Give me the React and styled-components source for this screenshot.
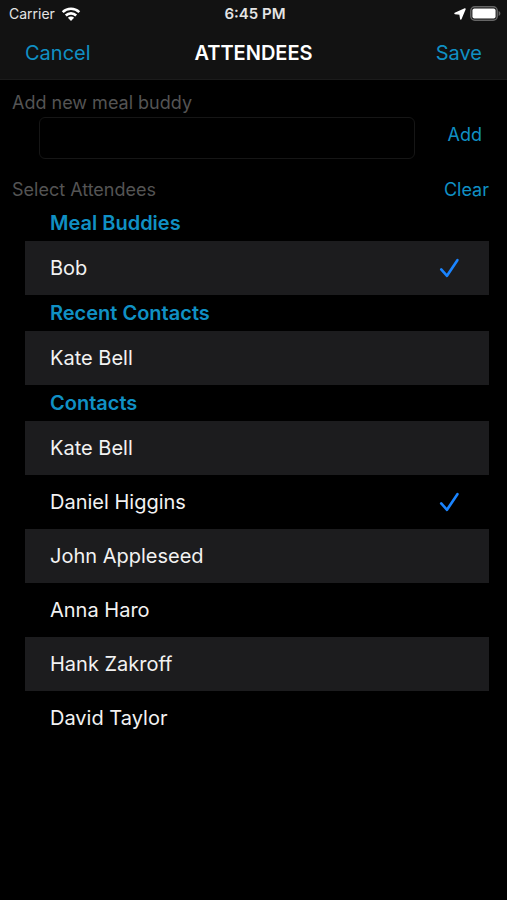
import { useState } from "react";
import styled, { createGlobalStyle } from "styled-components";

const GlobalStyle = createGlobalStyle`
  * {
    box-sizing: border-box;
  }

  body {
    margin: 0;
    background-color: #000;
    color: #f2f2f2;
    font-family: Inter, "Liberation Sans", sans-serif;
    font-size: 20px;
  }

  button,
  input {
    font: inherit;
  }
`;

const Screen = styled.div`
  min-height: 100vh;
  background-color: #000;
`;

const TopBar = styled.header`
  background-color: #121212;
  border-bottom: 1px solid #1b1b1b;
`;

const StatusBar = styled.div`
  display: grid;
  grid-template-columns: 1fr auto 1fr;
  align-items: center;
  height: 27px;
  padding: 0 6px 0 9px;
  font-size: 14px;
  color: #e4e4e4;
`;

const StatusGroup = styled.div`
  display: flex;
  align-items: center;
  justify-content: ${(props) => (props.$end ? "flex-end" : "flex-start")};
  gap: ${(props) => (props.$end ? "4px" : "6px")};
`;

const Clock = styled.time`
  font-size: 15px;
  font-weight: 600;
`;

const NavBar = styled.nav`
  display: grid;
  grid-template-columns: 1fr auto 1fr;
  align-items: center;
  height: 52px;
  padding: 0 25px;
`;

const Title = styled.h1`
  margin: 0;
  font-size: 20px;
  font-weight: 600;
  color: #fff;
`;

const TextButton = styled.button`
  padding: 0;
  border: 0;
  background: none;
  color: #1090c4;
  font-size: ${(props) => (props.$small ? "18px" : "20px")};
  line-height: 36px;
  justify-self: ${(props) => (props.$end ? "end" : "start")};
  cursor: pointer;
`;

const Content = styled.main`
  padding: 12px 18px 24px 12px;
`;

const Caption = styled.label`
  display: block;
  font-size: 18px;
  line-height: 22px;
  color: #545454;
`;

const AddForm = styled.form`
  display: flex;
  align-items: flex-start;
  gap: 33px;
  margin-top: 3px;
  padding: 0 7px 0 27px;
`;

const NameInput = styled.input`
  flex: 1;
  min-width: 0;
  height: 42px;
  padding: 0 10px;
  border: 1px solid #161616;
  border-radius: 6px;
  background-color: #000;
  color: #f2f2f2;
  outline: none;
`;

const ListHeader = styled.div`
  display: flex;
  align-items: center;
  justify-content: space-between;
  height: 30px;
  margin-top: 16px;
`;

const Group = styled.section`
  margin-left: 13px;
`;

const GroupTitle = styled.h2`
  margin: 0;
  padding-left: 25px;
  font-size: 20px;
  font-weight: 600;
  line-height: 36px;
  color: #1090c4;
`;

const List = styled.ul`
  margin: 0;
  padding: 0;
  list-style: none;
`;

const Item = styled.li`
  &:nth-child(odd) {
    background-color: #1c1c1e;
  }
`;

const ItemLabel = styled.label`
  display: flex;
  align-items: center;
  justify-content: space-between;
  height: 54px;
  padding: 0 28px 0 25px;
  cursor: pointer;
`;

const CheckBox = styled.span`
  display: grid;
  width: 22px;
  height: 22px;

  input,
  svg {
    grid-area: 1 / 1;
    width: 22px;
    height: 22px;
    margin: 0;
  }

  input {
    appearance: none;
  }

  svg {
    visibility: hidden;
    pointer-events: none;
  }

  input:checked + svg {
    visibility: visible;
  }
`;

const groups = [
  { title: "Meal Buddies", people: ["Bob"] },
  { title: "Recent Contacts", people: ["Kate Bell"] },
  {
    title: "Contacts",
    people: [
      "Kate Bell",
      "Daniel Higgins",
      "John Appleseed",
      "Anna Haro",
      "Hank Zakroff",
      "David Taylor",
    ],
  },
];

function WifiIcon() {
  return (
    <svg width="20" height="16" viewBox="0 0 20 16" aria-hidden="true">
      <g fill="none" stroke="#fff" strokeWidth="2.6">
        <path d="M1.7 6.1a12 12 0 0 1 16.6 0" />
        <path d="M4.8 9.5a7.4 7.4 0 0 1 10.4 0" />
      </g>
      <path d="M10 15 6.9 11.7a4.4 4.4 0 0 1 6.2 0z" fill="#fff" />
    </svg>
  );
}

function LocationIcon() {
  return (
    <svg width="12" height="12" viewBox="0 0 12 12" aria-hidden="true">
      <path
        d="M11 1 6.8 11 6 6 1 5.400z"
        fill="#fff"
        stroke="#fff"
        strokeWidth="1.5"
        strokeLinejoin="round"
      />
    </svg>
  );
}

function BatteryIcon() {
  return (
    <svg width="31" height="15" viewBox="0 0 31 15" aria-hidden="true">
      <rect
        x="0.8"
        y="0.8"
        width="26.4"
        height="13.4"
        rx="4"
        fill="none"
        stroke="#666"
        strokeWidth="1.5"
      />
      <rect x="2.4" y="2.4" width="23.2" height="10.2" rx="2" fill="#fff" />
      <path d="M28.6 5v5c1.1-.4 1.8-1.4 1.8-2.5S29.7 5.4 28.6 5z" fill="#666" />
    </svg>
  );
}

function CheckIcon() {
  return (
    <svg viewBox="0 0 22 22" aria-hidden="true">
      <path
        d="M2.2 12.4 8 18.8 18.4 3.2"
        fill="none"
        stroke="#1a84ff"
        strokeWidth="2.6"
        strokeLinecap="round"
        strokeLinejoin="round"
      />
    </svg>
  );
}

export default function App() {
  const [buddies, setBuddies] = useState([]);
  const [name, setName] = useState("");
  const [selected, setSelected] = useState([
    "Meal Buddies/Bob",
    "Contacts/Daniel Higgins",
  ]);

  const toggle = (key) => {
    setSelected((prev) =>
      prev.includes(key) ? prev.filter((k) => k !== key) : [...prev, key]
    );
  };

  const handleAdd = (e) => {
    e.preventDefault();
    const trimmed = name.trim();
    if (!trimmed) return;
    setBuddies((prev) => [...prev, trimmed]);
    setName("");
  };

  return (
    <>
      <GlobalStyle />
      <Screen>
        <TopBar>
          <StatusBar>
            <StatusGroup>
              Carrier
              <WifiIcon />
            </StatusGroup>
            <Clock>6:45 PM</Clock>
            <StatusGroup $end>
              <LocationIcon />
              <BatteryIcon />
            </StatusGroup>
          </StatusBar>
          <NavBar>
            <TextButton type="button">Cancel</TextButton>
            <Title>ATTENDEES</Title>
            <TextButton type="button" $end>
              Save
            </TextButton>
          </NavBar>
        </TopBar>

        <Content>
          <Caption htmlFor="buddy-name">Add new meal buddy</Caption>
          <AddForm onSubmit={handleAdd}>
            <NameInput
              id="buddy-name"
              type="text"
              value={name}
              onChange={(e) => setName(e.target.value)}
            />
            <TextButton type="submit" $small>
              Add
            </TextButton>
          </AddForm>

          <ListHeader>
            <Caption as="span">Select Attendees</Caption>
            <TextButton type="button" $small onClick={() => setSelected([])}>
              Clear
            </TextButton>
          </ListHeader>

          {groups.map(({ title, people }) => {
            const names =
              title === "Meal Buddies" ? [...people, ...buddies] : people;
            return (
              <Group key={title}>
                <GroupTitle>{title}</GroupTitle>
                <List>
                  {names.map((person) => {
                    const key = `${title}/${person}`;
                    return (
                      <Item key={key}>
                        <ItemLabel>
                          {person}
                          <CheckBox>
                            <input
                              type="checkbox"
                              checked={selected.includes(key)}
                              onChange={() => toggle(key)}
                            />
                            <CheckIcon />
                          </CheckBox>
                        </ItemLabel>
                      </Item>
                    );
                  })}
                </List>
              </Group>
            );
          })}
        </Content>
      </Screen>
    </>
  );
}
